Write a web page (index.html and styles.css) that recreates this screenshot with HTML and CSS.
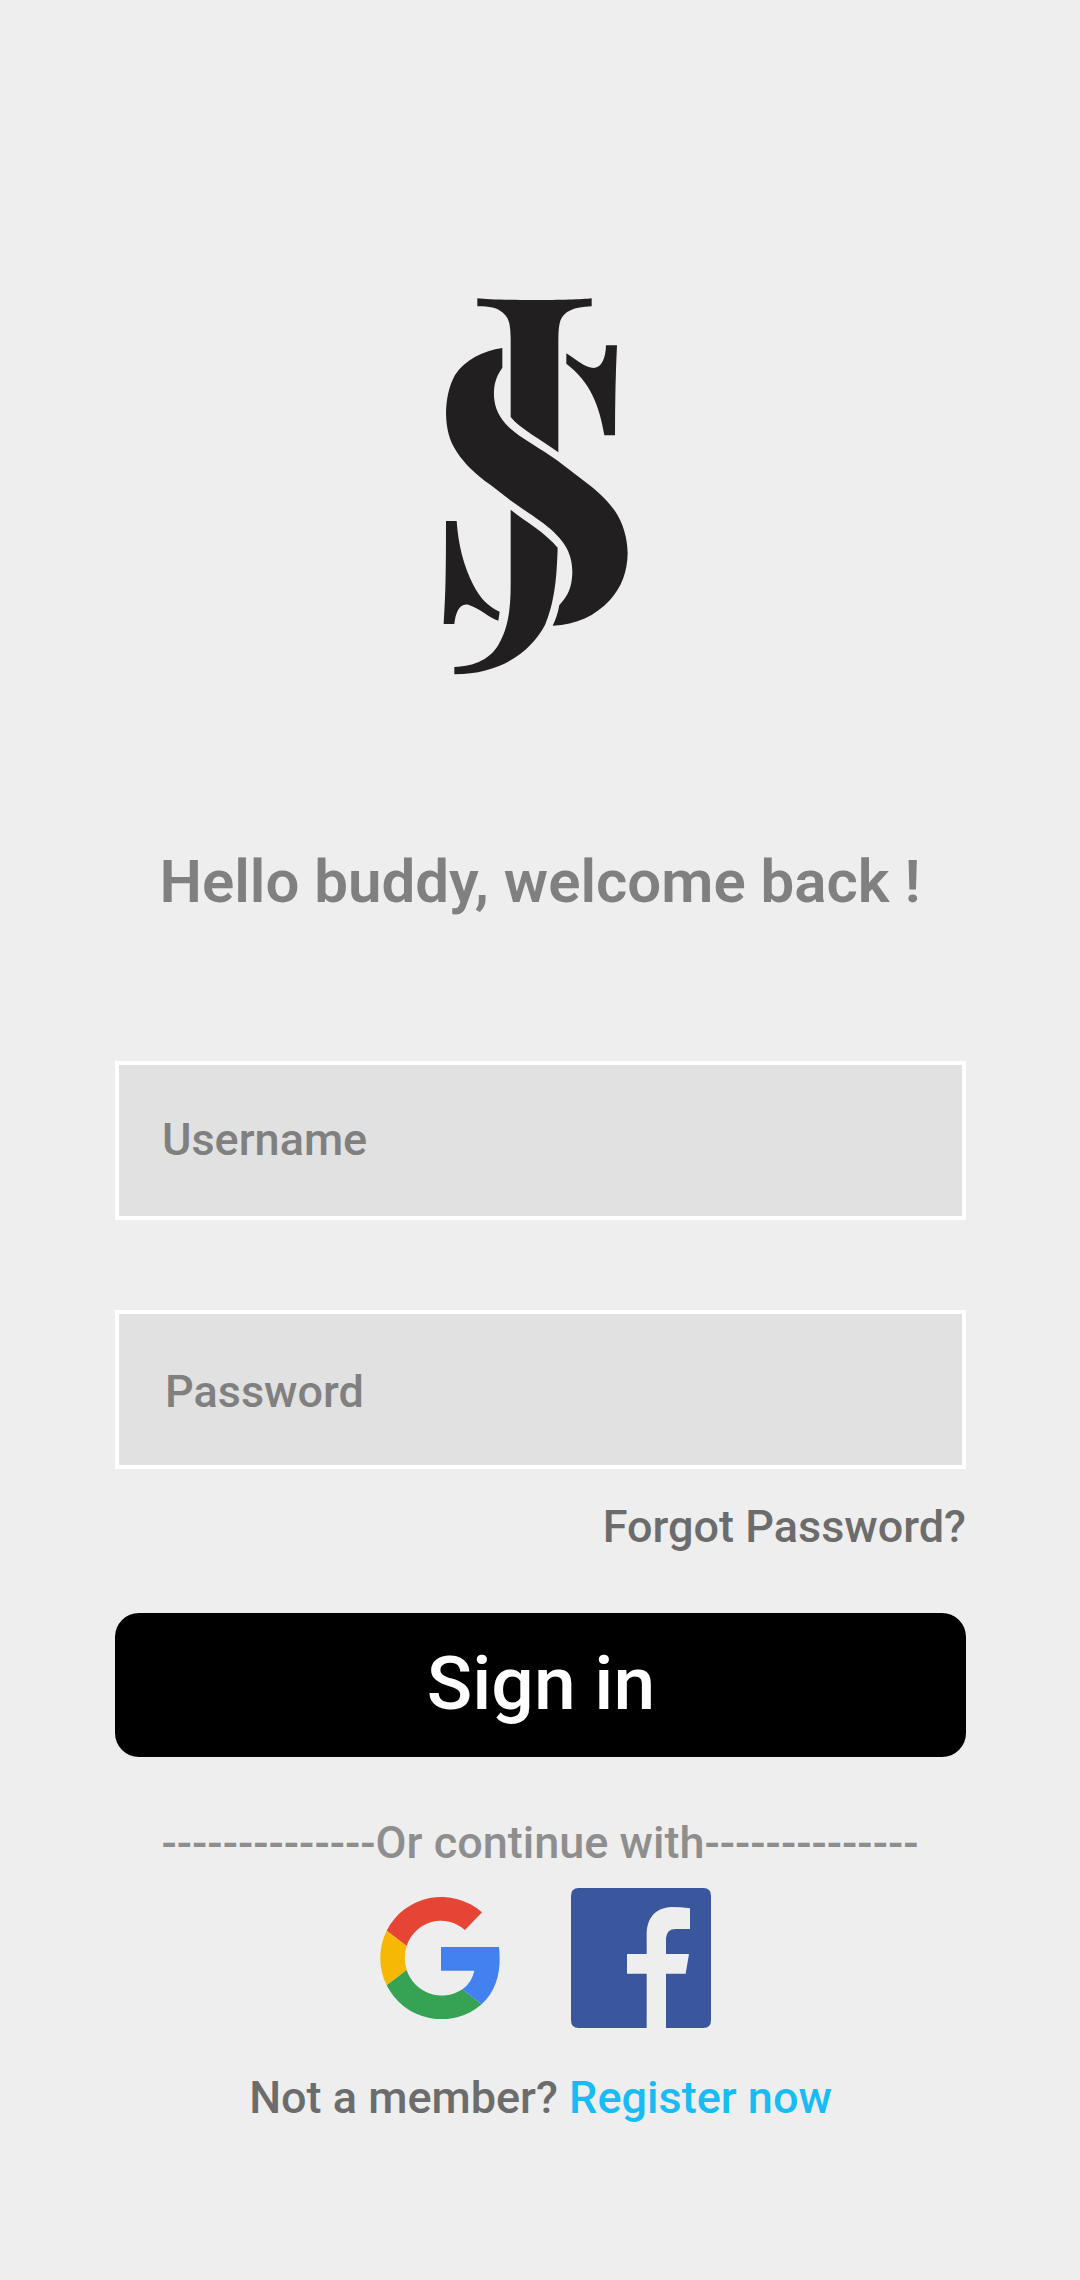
FILE: index.html
```html
<!DOCTYPE html>
<html lang="en">
<head>
<meta charset="utf-8">
<title>Sign in</title>
<link rel="stylesheet" href="styles.css">
</head>
<body>
<main class="login">
  <svg class="logo" viewBox="0 0 630 1185" role="img" aria-label="JS">
    <path d="M142 40C200 47 430 47 485 40V64C430 66 403 79 391 107Q385 125 385 165V502C335 464 270 432 242 396V160C241 112 236 98 217 82C200 68 180 64 142 64Z"/>
    <path d="M409 205C440 225 465 249 492 249C515 247 527 220 528 181H561Q555 300 555 451H523C508 360 480 290 409 236Z"/>
    <path d="M217 189V248C195 280 191 302 192 335C195 370 205 395 240 430C270 458 335 493 380 525L475 598C502 619 530 643 555 678C580 715 592 760 593 805C592 860 575 907 540 945C495 993 440 1019 368 1022Q382 995 388 960C415 932 425 908 427 865C427 838 423 815 410 790C395 762 370 738 340 715C310 692 275 671 245 649L182 600C138 569 105 538 80 500C57 466 49 430 48 385C49 340 57 303 75 270C105 224 160 197 217 189Z"/>
    <path d="M242 674C290 712 345 742 383 788C380 890 372 955 345 1020C305 1095 220 1167 73 1168V1146C140 1143 180 1120 205 1080C235 1030 242 970 242 900Z"/>
    <path d="M48 708H80C85 780 100 840 130 900C150 940 175 965 209 980L205 1007C180 1000 150 970 115 959C90 953 77 980 73 1017H41C47 930 48 850 48 708Z"/>
  </svg>

  <h1 class="greeting">Hello buddy, welcome back !</h1>

  <form class="form">
    <div class="field">Username</div>
    <div class="field field-password">Password</div>
    <a class="forgot">Forgot Password?</a>
    <button class="submit" type="button">Sign in</button>
  </form>

  <p class="divider">--------------Or continue with--------------</p>

  <div class="providers">
    <svg class="google" viewBox="60 78 360 369" role="img" aria-label="Google">
      <path fill="#e64435" d="M80 182A184 184 0 0 1 366 127L315 180A108 108 0 0 0 140 228Z"/>
      <path fill="#f6b805" d="M80 182A184 184 0 0 0 80 346L140 300A116 116 0 0 1 140 228Z"/>
      <path fill="#36a354" d="M80 346A184 184 0 0 0 365 403L307 358A111 111 0 0 1 140 300Z"/>
      <path fill="#4381f0" d="M243 231H417C424 295 414 357 365 403L307 358Q336 337 343 302H243Z"/>
    </svg>
    <svg class="facebook" viewBox="633 54 420 420" role="img" aria-label="Facebook">
      <path fill="#3a579d" d="M656 54H1030Q1053 54 1053 77V451Q1053 474 1030 474H918V311H977L987 252H918V205Q920 177 947 177H990V115Q960 111 935 111C885 113 860 145 860 195V252H801V311H860V474H656Q633 474 633 451V77Q633 54 656 54Z"/>
    </svg>
  </div>

  <p class="register">Not a member? <a class="register-link">Register now</a></p>
</main>
</body>
</html>
```

FILE: styles.css
```css
* {
  box-sizing: border-box;
}

body {
  margin: 0;
  background: #eeeeee;
  font-family: Roboto, sans-serif;
  font-weight: 500;
  font-size: 45px;
  line-height: 53px;
}

.login {
  display: flex;
  flex-direction: column;
  align-items: center;
  width: 1080px;
  height: 2280px;
  padding-top: 285px;
}

.logo {
  width: 210px;
  height: 395px;
  margin-right: 10px;
  fill: #221f20;
}

.greeting {
  margin: 167px 0 0;
  font-size: 60px;
  font-weight: 600;
  line-height: 70px;
  color: #808080;
  white-space: nowrap;
}

.form {
  display: flex;
  flex-direction: column;
  width: 851px;
  margin: 144px 0 0 1px;
}

.field {
  height: 159px;
  padding: 48px 43px;
  border: 4px solid #ffffff;
  background: #e1e1e1;
  color: #808080;
}

.field-password {
  margin-top: 90px;
  padding: 51px 46px;
}

.forgot {
  align-self: flex-end;
  margin-top: 31px;
  color: #6c6c6c;
}

.submit {
  height: 144px;
  margin-top: 60px;
  padding: 0 0 4px 1px;
  border: 0;
  border-radius: 24px;
  background: #000000;
  color: #ffffff;
  font: 500 75px/88px Roboto, sans-serif;
}

.divider {
  margin: 59px 0 0;
  color: #8e8e8e;
  white-space: nowrap;
}

.providers {
  display: flex;
  align-items: flex-start;
  gap: 71px;
  margin: 19px 0 0 11px;
}

.google {
  width: 120px;
  height: 123px;
  margin-top: 8px;
}

.facebook {
  width: 140px;
  height: 140px;
}

.register {
  margin: 43px 0 0 1px;
  color: #6c6c6c;
  white-space: nowrap;
}

.register-link {
  color: #18bbf4;
}
```
